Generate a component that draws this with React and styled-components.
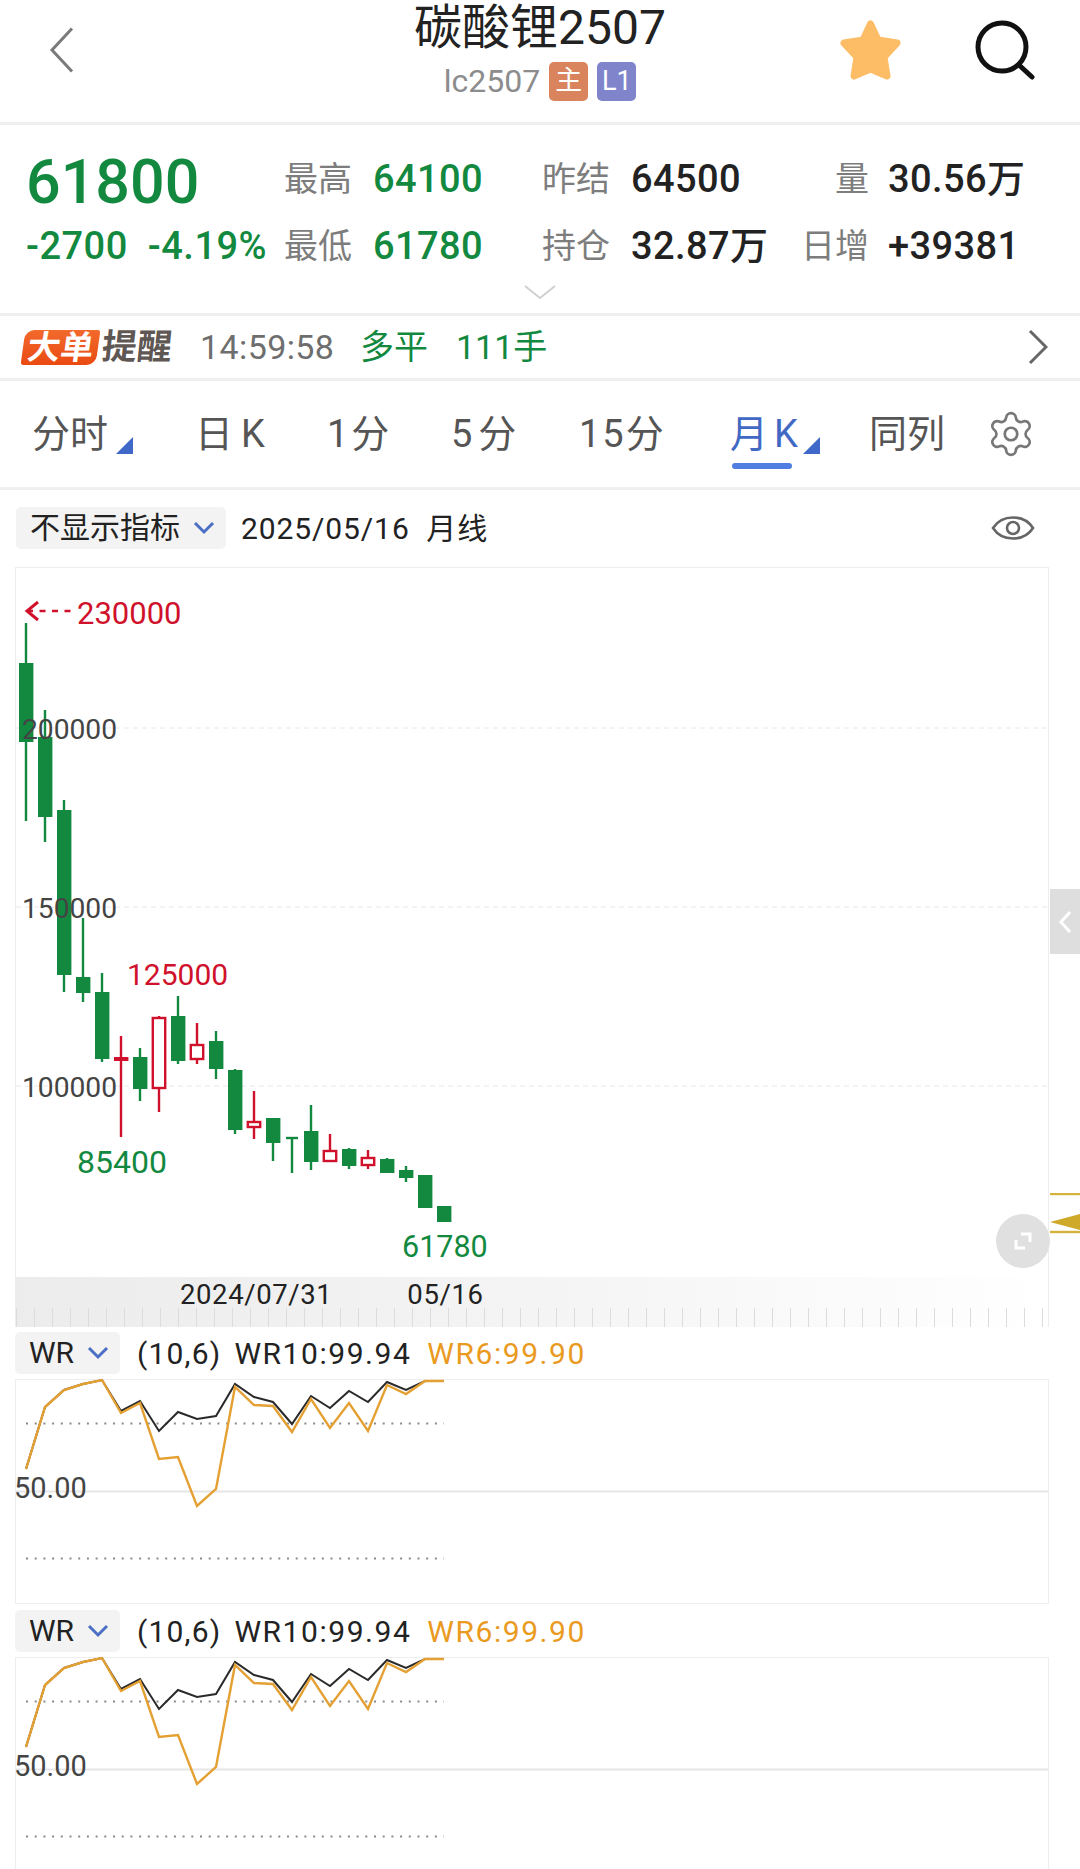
import React from "react";
import styled, { createGlobalStyle } from "styled-components";
import { Settings } from "lucide-react";

const FONT = `Roboto, "Noto Sans CJK SC", sans-serif`;
const GREEN = "#12893f";
const RED = "#d0112b";
const ORANGE = "#e99a1f";

// page coordinates: [x, high, bodyTop, bodyBottom, low, kind]
const CANDLES = [
  [26, 623, 663, 742, 821, "down"],
  [45, 710, 737, 817, 842, "down"],
  [64, 800, 810, 975, 992, "down"],
  [83, 918, 977, 993, 1002, "down"],
  [102, 973, 992, 1059, 1062, "down"],
  [121, 1036, 1057, 1061, 1137, "flat"],
  [140, 1048, 1057, 1089, 1101, "down"],
  [159, 1016, 1017, 1089, 1112, "up"],
  [178, 996, 1016, 1061, 1064, "down"],
  [197, 1023, 1044, 1060, 1064, "up"],
  [216, 1031, 1041, 1069, 1079, "down"],
  [235, 1069, 1070, 1130, 1134, "down"],
  [254, 1091, 1121, 1128, 1139, "up"],
  [273, 1118, 1118, 1143, 1161, "down"],
  [292, 1138, 1138, 1140, 1173, "tee"],
  [311, 1105, 1131, 1162, 1170, "down"],
  [330, 1134, 1150, 1162, 1162, "up"],
  [349, 1148, 1149, 1166, 1169, "down"],
  [368, 1150, 1157, 1166, 1169, "up"],
  [387, 1158, 1159, 1173, 1173, "down"],
  [406, 1166, 1170, 1178, 1182, "down"],
  [425, 1175, 1175, 1208, 1208, "down"],
  [444, 1206, 1206, 1222, 1222, "down"],
];

// y offsets from the top of the WR panel, one point per candle
const WR_SLOW = [89, 27, 10, 4, 0, 31, 21, 51, 32, 39, 36, 4, 17, 22, 44, 16, 28, 11, 22, 2, 10, 1, 1];
const WR_FAST = [89, 27, 10, 4, 0, 33, 23, 79, 77, 126, 109, 7, 25, 26, 52, 19, 48, 23, 51, 5, 14, 1, 1];

const GlobalStyle = createGlobalStyle`
  html, body {
    margin: 0;
    padding: 0;
    background: #fff;
  }
  body {
    font-family: ${FONT};
  }
`;

const Page = styled.div`
  width: 1080px;
  height: 1869px;
  overflow: hidden;
  background: #fff;
  color: #222;
`;

const Header = styled.header`
  height: 122px;
  display: grid;
  grid-template-columns: 300px 480px 1fr;
  border-bottom: 3px solid #efefef;
`;

const BackButton = styled.div`
  padding: 27px 0 0 49px;
`;

const TitleBlock = styled.div`
  display: flex;
  flex-direction: column;
  align-items: center;
`;

const Title = styled.div`
  font-size: 48px;
  line-height: 56px;
`;

const SubTitle = styled.div`
  display: flex;
  align-items: center;
  gap: 9px;
  font-size: 32px;
  line-height: 39px;
  margin-top: 6px;
  color: #8c8c8c;
`;

const Badge = styled.span`
  width: 39px;
  height: 39px;
  border-radius: 5px;
  display: flex;
  align-items: center;
  justify-content: center;
  font-size: 27px;
  color: #fff;
  background: ${(p) => p.$color};
`;

const HeaderActions = styled.div`
  display: flex;
  align-items: flex-start;
  padding: 20px 0 0 60px;
  gap: 71px;
`;

const Quote = styled.section`
  height: 191px;
  box-sizing: border-box;
  padding: 20px 0 0 26px;
  border-bottom: 3px solid #efefef;
`;

const QuoteGrid = styled.div`
  display: grid;
  grid-template-columns: 258px 258px 259px auto;
  grid-auto-rows: 67px;
  align-items: center;
`;

const LastPrice = styled.div`
  font-size: 61px;
  line-height: 67px;
  font-weight: 500;
  margin-top: 7px;
  color: ${GREEN};
`;

const Change = styled.div`
  display: flex;
  gap: 20px;
  font-size: 38px;
  line-height: 44px;
  font-weight: 500;
  letter-spacing: 0.5px;
  color: ${GREEN};
`;

const Stat = styled.div`
  display: flex;
  align-items: center;
  gap: ${(p) => (p.$wide ? 19 : 21)}px;
`;

const StatLabel = styled.span`
  width: 68px;
  text-align: right;
  white-space: nowrap;
  font-size: 34px;
  line-height: 44px;
  color: #7d7d7d;
`;

const StatValue = styled.span`
  font-size: 38px;
  line-height: 44px;
  font-weight: 500;
  letter-spacing: 0.4px;
  white-space: nowrap;
  color: ${(p) => (p.$green ? GREEN : "#222")};
`;

const Caret = styled.div`
  display: flex;
  justify-content: center;
  margin: 6px 0 0 -26px;
`;

const AlertRow = styled.div`
  height: 62px;
  display: flex;
  align-items: center;
  line-height: 44px;
  padding: 0 32px 0 23px;
  border-bottom: 3px solid #efefef;
`;

const AlertLogo = styled.div`
  display: flex;
  width: 177px;
  font-size: 33px;
  line-height: 35px;
  font-weight: 700;
`;

const AlertBadge = styled.span`
  width: 75px;
  text-align: center;
  color: #fff;
  background: linear-gradient(180deg, #f26a2c, #e94a12);
  border-radius: 9px 3px 9px 3px;
  transform: skewX(-8deg);
`;

const AlertText = styled.span`
  width: 74px;
  text-align: right;
  font-size: 35px;
  color: #5f5754;
  transform: skewX(-6deg);
`;

const AlertTime = styled.span`
  font-size: 34px;
  letter-spacing: 0.4px;
  color: #6e6e6e;
  width: 160px;
`;

const AlertInfo = styled.span`
  font-size: 34px;
  color: ${GREEN};
  margin-right: 28px;
`;

const AlertArrow = styled.div`
  margin-left: auto;
  display: flex;
`;

const Tabs = styled.nav`
  height: 109px;
  box-sizing: border-box;
  display: flex;
  align-items: center;
  padding-left: 32px;
  border-bottom: 3px solid #efefef;
`;

const Tab = styled.div`
  position: relative;
  width: ${(p) => p.$width}px;
  font-size: 38px;
  line-height: 50px;
  white-space: nowrap;
  letter-spacing: ${(p) => p.$track || 0}px;
  color: ${(p) => (p.$active ? "#4169c4" : "#555")};
`;

const TabCorner = styled.span`
  position: absolute;
  top: 28px;
  left: ${(p) => p.$left}px;
  width: 0;
  height: 0;
  border-style: solid;
  border-width: 0 0 17px 17px;
  border-color: transparent transparent #3f68c8 transparent;
`;

const TabLine = styled.span`
  position: absolute;
  left: 2px;
  top: 54px;
  width: 60px;
  height: 6px;
  border-radius: 3px;
  background: #4f7de0;
`;

const ToolBar = styled.div`
  height: 77px;
  box-sizing: border-box;
  display: flex;
  align-items: flex-start;
  padding: 17px 45px 0 16px;
`;

const Picker = styled.div`
  height: ${(p) => p.$height}px;
  box-sizing: border-box;
  width: ${(p) => p.$width}px;
  display: flex;
  align-items: center;
  gap: 13px;
  padding-left: ${(p) => p.$inset}px;
  border-radius: 5px;
  background: #f3f3f3;
  font-size: 30px;
  line-height: 42px;
  color: #222;
  white-space: nowrap;
`;

const ToolDate = styled.div`
  margin-left: 15px;
  height: 42px;
  line-height: 43px;
  font-size: 30px;
  letter-spacing: 0.9px;
  white-space: pre;
`;

const EyeIcon = styled.svg`
  margin-left: auto;
  margin-top: 6px;
`;

const ChartArea = styled.section`
  position: relative;
  padding-left: 15px;
  width: 1080px;
  box-sizing: border-box;
`;

const ChartFrame = styled.div`
  width: 1034px;
  height: 760px;
  border: solid #eeeeee;
  border-width: 1px 1px 0 1px;
  box-sizing: border-box;
  display: flex;
  flex-direction: column;
`;

const CandleSvg = styled.svg`
  display: block;
  overflow: visible;
  font-family: ${FONT};
`;

const TimeAxis = styled.div`
  flex: 1;
  display: flex;
  align-items: flex-start;
  font-size: 27.5px;
  font-weight: 400;
  letter-spacing: 0.6px;
  color: #222;
  line-height: 36px;
  background:
    repeating-linear-gradient(90deg, #dcdcdc 0 1px, transparent 1px 18px) left bottom / 100% 19px no-repeat,
    linear-gradient(90deg, #ececec, #f4f4f4 50%, #ffffff);
`;

const AxisDate = styled.span`
  margin-left: ${(p) => p.$gap}px;
`;

const SideHandle = styled.div`
  position: absolute;
  right: 0;
  top: 322px;
  width: 30px;
  height: 65px;
  display: flex;
  align-items: center;
  justify-content: center;
  background: #dedede;
`;

const ExpandButton = styled.div`
  position: absolute;
  left: 996px;
  top: 647px;
  width: 54px;
  height: 54px;
  border-radius: 50%;
  display: flex;
  align-items: center;
  justify-content: center;
  background: #e0e0e0;
`;

const PriceMarker = styled.svg`
  position: absolute;
  right: 0;
  top: 626px;
`;

const WrSection = styled.section`
  height: 278px;
  box-sizing: border-box;
  padding: 4px 0 0 15px;
`;

const WrHead = styled.div`
  height: 44px;
  margin-bottom: 4px;
  display: flex;
  align-items: center;
  font-size: 30px;
  white-space: pre;
`;

const WrParam = styled.span`
  margin: 0 13px 0 17px;
  letter-spacing: 1.2px;
`;

const WrValue = styled.span`
  margin-right: 16px;
  letter-spacing: 1.55px;
  color: ${(p) => p.$color};
`;

const WrFrame = styled.div`
  width: 1034px;
  height: 225px;
  box-sizing: border-box;
  border: 1px solid #eeeeee;
`;

const WrSvg = styled.svg`
  display: block;
  overflow: visible;
  font-family: ${FONT};
`;

function Candle({ x, high, top, bottom, low, kind }) {
  const color = kind === "down" ? GREEN : RED;
  if (kind === "tee") {
    return (
      <g stroke={GREEN} strokeWidth="2.4">
        <line x1={x} y1={high} x2={x} y2={low} />
        <line x1={x - 6} y1={high} x2={x + 6} y2={high} />
      </g>
    );
  }
  const hollow = kind === "up";
  return (
    <g>
      <line x1={x} y1={high} x2={x} y2={low} stroke={color} strokeWidth="2.4" />
      {hollow ? (
        <rect x={x - 6.2} y={top + 1} width={12.4} height={bottom - top - 2} fill="#fff" stroke={color} strokeWidth="2.4" />
      ) : (
        <rect x={x - 7} y={top} width={14.4} height={bottom - top} fill={color} />
      )}
    </g>
  );
}

function CandleChart() {
  return (
    // viewBox keeps page coordinates so candle data reads like the screen
    <CandleSvg width="1032" height="709" viewBox="16 568 1032 709">
      {[728, 907, 1086].map((y) => (
        <line key={y} x1="16" y1={y} x2="1048" y2={y} stroke="#e8e8e8" strokeDasharray="5 4" strokeWidth="1" />
      ))}
      {CANDLES.map(([x, high, top, bottom, low, kind]) => (
        <Candle key={x} x={x} high={high} top={top} bottom={bottom} low={low} kind={kind} />
      ))}
      <g fill="#444" fontSize="28.2">
        <text x="22" y="739">200000</text>
        <text x="22" y="918">150000</text>
        <text x="22" y="1097">100000</text>
      </g>
      <g fill="none" stroke={RED} strokeWidth="2.4">
        <path d="M38 602 L27 611 L38 620" strokeWidth="3" />
        <line x1="27" y1="611" x2="77" y2="611" strokeDasharray="6 6.5" />
      </g>
      <text x="77" y="624" fill={RED} fontSize="31">230000</text>
      <text x="127" y="985" fill={RED} fontSize="30">125000</text>
      <text x="77" y="1173" fill={GREEN} fontSize="32">85400</text>
      <text x="402" y="1257" fill={GREEN} fontSize="30.5">61780</text>
    </CandleSvg>
  );
}

const toPoints = (list) => list.map((y, i) => `${26 + i * 19 - 16},${y}`).join(" ");

function WrPanel() {
  return (
    <WrSection>
      <WrHead>
        <Picker $width={105} $height={42} $inset={14}>
          WR
          <svg width="22" height="14" viewBox="0 0 22 14">
            <path d="M2 2 L11 11 L20 2" fill="none" stroke="#4b6fc4" strokeWidth="3" />
          </svg>
        </Picker>
        <WrParam>(10,6)</WrParam>
        <WrValue $color="#222">WR10:99.94</WrValue>
        <WrValue $color={ORANGE}>WR6:99.90</WrValue>
      </WrHead>
      <WrFrame>
        <WrSvg width="1032" height="223" viewBox="0 0 1032 223">
          <line x1="0" y1="111.5" x2="1032" y2="111.5" stroke="#e6e6e6" strokeWidth="2" />
          {[43.5, 178.5].map((y) => (
            <line key={y} x1="10" y1={y} x2="428" y2={y} stroke="#8a8a8a" strokeWidth="2" strokeDasharray="2 6.7" />
          ))}
          <polyline points={toPoints(WR_SLOW)} fill="none" stroke="#2a2a2a" strokeWidth="2" />
          <polyline points={toPoints(WR_FAST)} fill="none" stroke="#e4a033" strokeWidth="2.4" />
          <text x="-2" y="118" fontSize="29" fill="#444">50.00</text>
        </WrSvg>
      </WrFrame>
    </WrSection>
  );
}

export default function App() {
  return (
    <Page>
      <GlobalStyle />
      <Header>
        <BackButton>
          <svg width="26" height="46" viewBox="0 0 26 46">
            <path d="M23 1.5 L3 23 L23 44.5" fill="none" stroke="#7a7a7a" strokeWidth="3" />
          </svg>
        </BackButton>
        <TitleBlock>
          <Title>碳酸锂2507</Title>
          <SubTitle>
            lc2507
            <Badge $color="#d9845c">主</Badge>
            <Badge $color="#8085cb">L1</Badge>
          </SubTitle>
        </TitleBlock>
        <HeaderActions>
          <svg width="62" height="62" viewBox="0 0 62 62">
            <path
              d="M30.5 4 L38 20 L57 23 L44 37 L47 56 L30.5 49 L14 56 L17 37 L4 23 L23 20 Z"
              fill="#fdbd66"
              stroke="#fdbd66"
              strokeWidth="7"
              strokeLinejoin="round"
            />
          </svg>
          <svg width="62" height="62" viewBox="0 0 62 62">
            <circle cx="29" cy="27" r="24" fill="none" stroke="#111" strokeWidth="5" />
            <path d="M46 45 L59 57" stroke="#111" strokeWidth="5" strokeLinecap="round" />
          </svg>
        </HeaderActions>
      </Header>

      <Quote>
        <QuoteGrid>
          <LastPrice>61800</LastPrice>
          <Stat>
            <StatLabel>最高</StatLabel>
            <StatValue $green>64100</StatValue>
          </Stat>
          <Stat>
            <StatLabel>昨结</StatLabel>
            <StatValue>64500</StatValue>
          </Stat>
          <Stat $wide>
            <StatLabel>量</StatLabel>
            <StatValue>30.56万</StatValue>
          </Stat>
          <Change>
            <span>-2700</span>
            <span>-4.19%</span>
          </Change>
          <Stat>
            <StatLabel>最低</StatLabel>
            <StatValue $green>61780</StatValue>
          </Stat>
          <Stat>
            <StatLabel>持仓</StatLabel>
            <StatValue>32.87万</StatValue>
          </Stat>
          <Stat $wide>
            <StatLabel>日增</StatLabel>
            <StatValue>+39381</StatValue>
          </Stat>
        </QuoteGrid>
        <Caret>
          <svg width="32" height="15" viewBox="0 0 32 15">
            <path d="M1 1 L16 13 L31 1" fill="none" stroke="#d0d0d0" strokeWidth="2" />
          </svg>
        </Caret>
      </Quote>

      <AlertRow>
        <AlertLogo>
          <AlertBadge>大单</AlertBadge>
          <AlertText>提醒</AlertText>
        </AlertLogo>
        <AlertTime>14:59:58</AlertTime>
        <AlertInfo>多平</AlertInfo>
        <AlertInfo>111手</AlertInfo>
        <AlertArrow>
          <svg width="20" height="36" viewBox="0 0 20 36">
            <path d="M2 2 L18 18 L2 34" fill="none" stroke="#666" strokeWidth="3" />
          </svg>
        </AlertArrow>
      </AlertRow>

      <Tabs>
        <Tab $width={163}>
          分时
          <TabCorner $left={84} />
        </Tab>
        <Tab $width={132} $track={8}>日K</Tab>
        <Tab $width={124} $track={3}>1分</Tab>
        <Tab $width={128} $track={6}>5分</Tab>
        <Tab $width={151} $track={2}>15分</Tab>
        <Tab $width={139} $track={6} $active>
          月K
          <TabCorner $left={73} />
          <TabLine />
        </Tab>
        <Tab $width={117}>同列</Tab>
        <Settings size={50} color="#777" strokeWidth={1.3} />
      </Tabs>

      <ToolBar>
        <Picker $width={210} $height={42} $inset={14}>
          不显示指标
          <svg width="22" height="14" viewBox="0 0 22 14">
            <path d="M2 2 L11 11 L20 2" fill="none" stroke="#4b6fc4" strokeWidth="3" />
          </svg>
        </Picker>
        <ToolDate>2025/05/16  月线</ToolDate>
        <EyeIcon width="44" height="30" viewBox="0 0 44 30">
          <path d="M2 15 C11 1, 33 1, 42 15 C33 29, 11 29, 2 15 Z" fill="none" stroke="#666" strokeWidth="2.6" />
          <circle cx="22" cy="15" r="6" fill="none" stroke="#666" strokeWidth="2.6" />
        </EyeIcon>
      </ToolBar>

      <ChartArea>
        <ChartFrame>
          <CandleChart />
          <TimeAxis>
            <AxisDate $gap={164}>2024/07/31</AxisDate>
            <AxisDate $gap={75}>05/16</AxisDate>
          </TimeAxis>
        </ChartFrame>
        <SideHandle>
          <svg width="14" height="24" viewBox="0 0 14 24">
            <path d="M12 2 L3 12 L12 22" fill="none" stroke="#fff" strokeWidth="3" />
          </svg>
        </SideHandle>
        <ExpandButton>
          <svg width="22" height="22" viewBox="0 0 22 22">
            <path d="M9 4 H18 V12 M4 10 V18 H13" fill="none" stroke="#fff" strokeWidth="3" />
          </svg>
        </ExpandButton>
        <PriceMarker width="30" height="42" viewBox="0 0 30 42">
          <line x1="0" y1="1" x2="30" y2="1" stroke="#d4b23c" strokeWidth="2.4" />
          <path d="M0 29 L30 21 V37 Z" fill="#cfa92a" />
          <line x1="0" y1="39" x2="30" y2="39" stroke="#d4b23c" strokeWidth="2.4" />
        </PriceMarker>
      </ChartArea>

      <WrPanel />
      <WrPanel />
    </Page>
  );
}
